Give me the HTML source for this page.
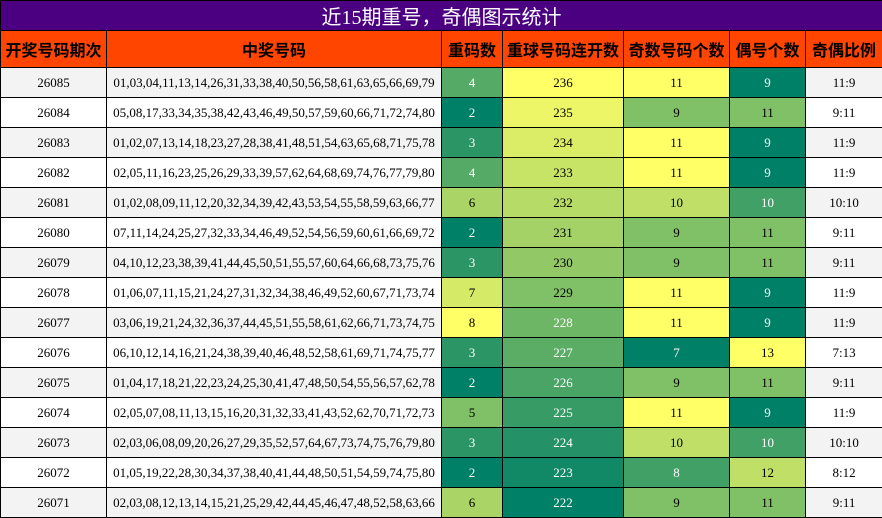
<!DOCTYPE html><html><head><meta charset="utf-8"><style>
body{margin:0;width:882px;height:517px;overflow:hidden;background:#fff}
table{border-collapse:collapse;width:882px;table-layout:fixed;font-family:"Liberation Serif","Noto Sans CJK SC",serif;font-size:13px}
td,th{border:1px solid #000;text-align:center;padding:0;white-space:nowrap;overflow:hidden}
.t{background:#4b0082;color:#fff;height:27px;font-size:20px;font-weight:normal;font-family:"Liberation Serif","Noto Sans CJK SC",sans-serif}
.h th{background:#ff4500;height:36px;font-size:16px;font-weight:bold;font-family:"Liberation Sans","Noto Sans CJK SC",sans-serif;color:#000}
tr.r td{height:29px}
tr.r:nth-child(odd) td.g{background:#f3f3f3}
</style></head><body><table>
<colgroup><col style="width:106px"><col style="width:335px"><col style="width:61px"><col style="width:121px"><col style="width:106px"><col style="width:76px"><col style="width:77px"></colgroup>
<tr><th class="t" colspan="7">近15期重号，奇偶图示统计</th></tr>
<tr class="h"><th>开奖号码期次</th><th>中奖号码</th><th>重码数</th><th>重球号码连开数</th><th>奇数号码个数</th><th>偶号个数</th><th>奇偶比例</th></tr>
<tbody id="b"></tbody></table>
<script>
var d=[["26085","01,03,04,11,13,14,26,31,33,38,40,50,56,58,61,63,65,66,69,79",4,236,11,9],
["26084","05,08,17,33,34,35,38,42,43,46,49,50,57,59,60,66,71,72,74,80",2,235,9,11],
["26083","01,02,07,13,14,18,23,27,28,38,41,48,51,54,63,65,68,71,75,78",3,234,11,9],
["26082","02,05,11,16,23,25,26,29,33,39,57,62,64,68,69,74,76,77,79,80",4,233,11,9],
["26081","01,02,08,09,11,12,20,32,34,39,42,43,53,54,55,58,59,63,66,77",6,232,10,10],
["26080","07,11,14,24,25,27,32,33,34,46,49,52,54,56,59,60,61,66,69,72",2,231,9,11],
["26079","04,10,12,23,38,39,41,44,45,50,51,55,57,60,64,66,68,73,75,76",3,230,9,11],
["26078","01,06,07,11,15,21,24,27,31,32,34,38,46,49,52,60,67,71,73,74",7,229,11,9],
["26077","03,06,19,21,24,32,36,37,44,45,51,55,58,61,62,66,71,73,74,75",8,228,11,9],
["26076","06,10,12,14,16,21,24,38,39,40,46,48,52,58,61,69,71,74,75,77",3,227,7,13],
["26075","01,04,17,18,21,22,23,24,25,30,41,47,48,50,54,55,56,57,62,78",2,226,9,11],
["26074","02,05,07,08,11,13,15,16,20,31,32,33,41,43,52,62,70,71,72,73",5,225,11,9],
["26073","02,03,06,08,09,20,26,27,29,35,52,57,64,67,73,74,75,76,79,80",3,224,10,10],
["26072","01,05,19,22,28,30,34,37,38,40,41,44,48,50,51,54,59,74,75,80",2,223,8,12],
["26071","02,03,08,12,13,14,15,21,25,29,42,44,45,46,47,48,52,58,63,66",6,222,9,11]];
function c(v,a,b){var x=(v-a)/(b-a);var r=Math.round(255*x),g=Math.round(128+127*x);
return 'background:rgb('+r+','+g+',102);color:'+(x<0.45?'#fff':'#000')}
var h='';d.forEach(function(r){h+='<tr class="r"><td class="g">'+r[0]+'</td><td class="g">'+r[1]+'</td><td style="'+c(r[2],2,8)+'">'+r[2]+'</td><td style="'+c(r[3],222,236)+'">'+r[3]+'</td><td style="'+c(r[4],7,11)+'">'+r[4]+'</td><td style="'+c(r[5],9,13)+'">'+r[5]+'</td><td class="g">'+r[4]+':'+r[5]+'</td></tr>'});
document.getElementById('b').innerHTML=h;
</script></body></html>
